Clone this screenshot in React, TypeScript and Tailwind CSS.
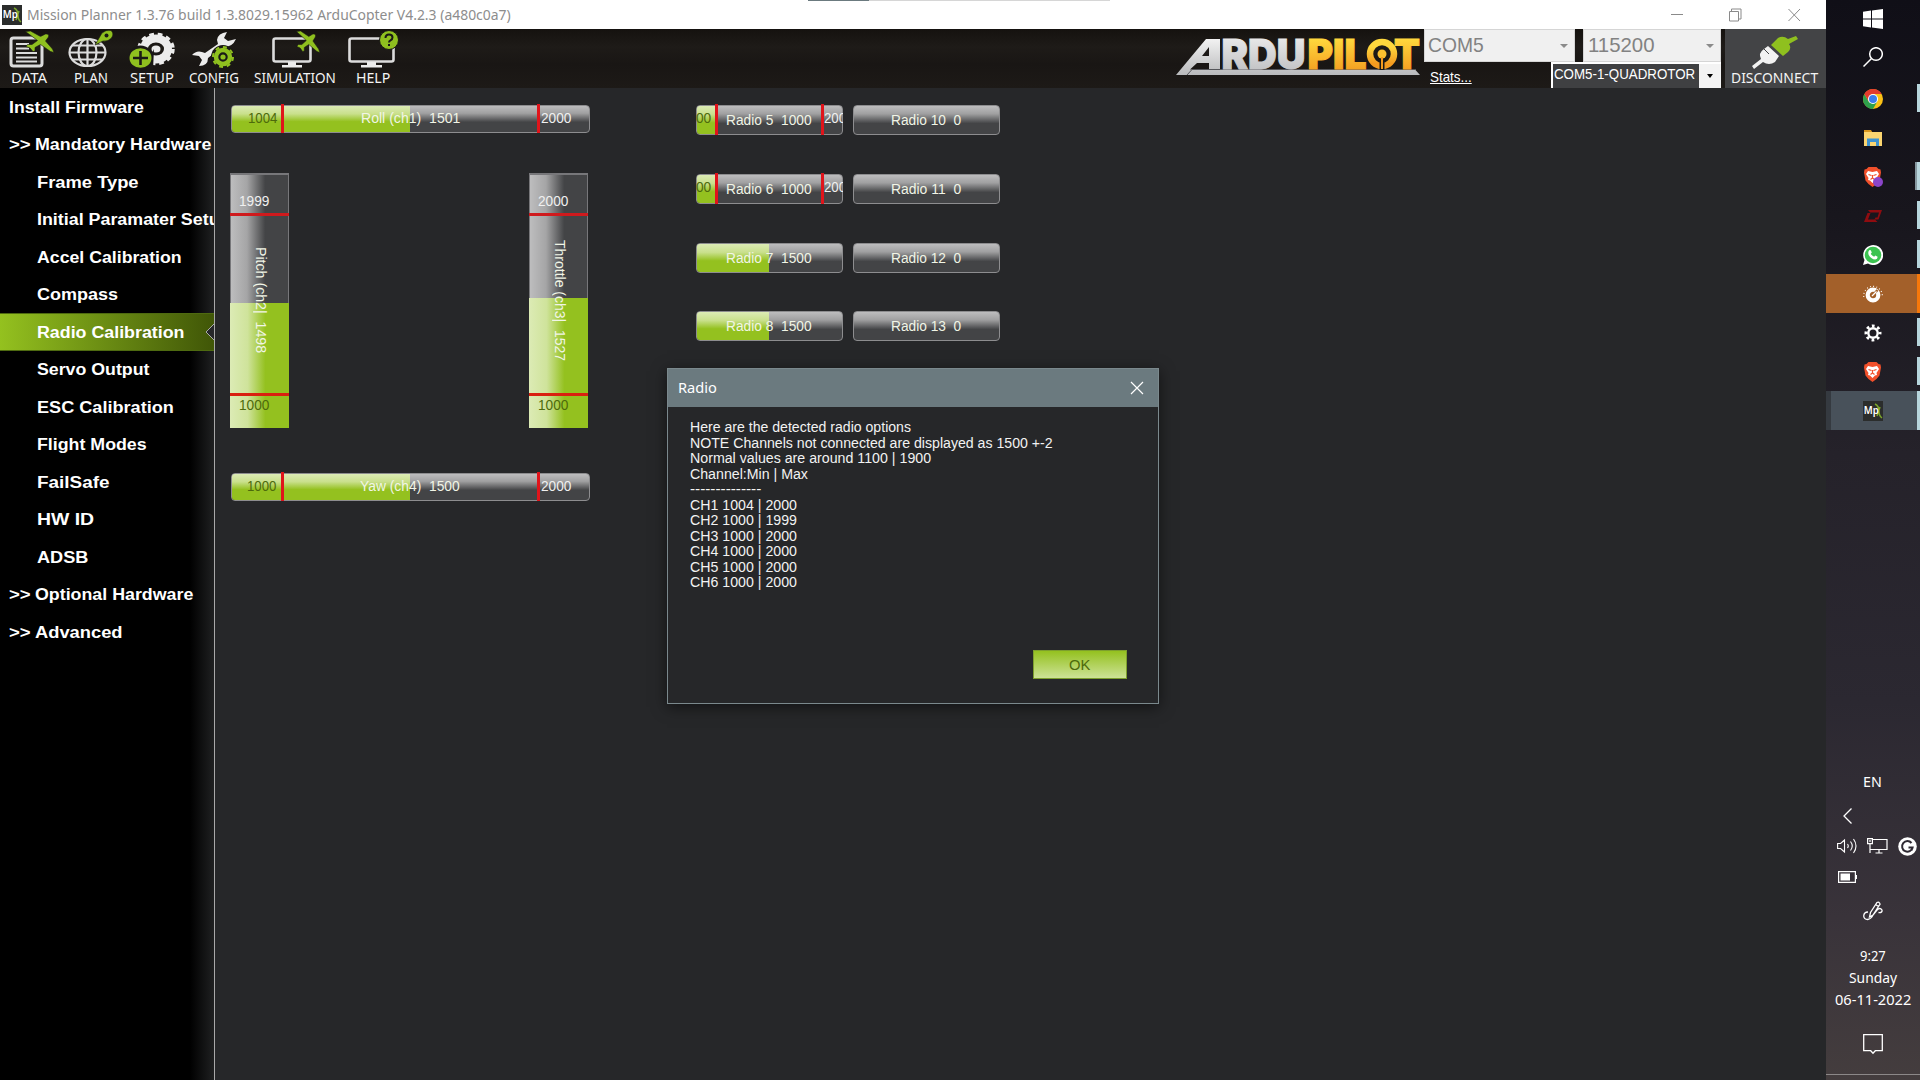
import { useLayoutEffect, useRef, useState } from "react";
import type { ReactNode } from "react";

/** Text squeezed or stretched horizontally to an exact width. */
function Fit({ w, className = "", children }: { w: number; className?: string; children: ReactNode }) {
  const ref = useRef<HTMLSpanElement>(null);
  const [scale, setScale] = useState(1);
  useLayoutEffect(() => {
    if (ref.current) setScale(w / ref.current.offsetWidth);
  }, [w]);
  return (
    <span className={`block whitespace-pre ${className}`} style={{ width: w }}>
      <span ref={ref} className="inline-block origin-left" style={{ transform: `scaleX(${scale})` }}>
        {children}
      </span>
    </span>
  );
}

const PLANE =
  "M0 .5 L5 0 L15 5.500 L20 3 Q24 2.500 23 6 L20 10 L27 18 L28.500 21.500 L25 20.500 L15 13.500 L9.500 16.500 L9.500 20 L7.500 20.500 L4.500 17 L.5 15.500 L2 13.500 L6.500 13.500 L12 9.500 Z";

function DataIcon() {
  return (
    <svg width="48" height="40" viewBox="0 0 48 40" className="-mr-1">
      <rect x="4" y="8" width="31" height="28" rx="2.5" fill="none" stroke="#dcdcdc" strokeWidth="3" />
      <path d="M9 14h13M9 18.500h13M9 23h21M9 27.500h21M9 31.500h21" stroke="#dcdcdc" strokeWidth="2.200" />
      <path d={PLANE} fill="#8fc01f" stroke="#1a1816" strokeWidth=".6" transform="translate(18.500 1)" />
    </svg>
  );
}

function PlanIcon() {
  return (
    <svg width="46" height="40" viewBox="0 0 46 40">
      <g fill="none" stroke="#dcdcdc" strokeWidth="2.200">
        <ellipse cx="19.500" cy="22.500" rx="18" ry="13.500" />
        <ellipse cx="19.500" cy="22.500" rx="9" ry="13.500" />
        <path d="M19.500 9v27M1.500 22.500h36M4.500 15.500h30M4.500 29.500h30" />
      </g>
      <path d="M27 15 L34 3 Q38 -.5 43 .5 Q46.500 3.500 43.500 8 Q40 12 35 11 Z" fill="#8fc01f" stroke="#1a1816" strokeWidth=".6" />
      <circle cx="38.500" cy="5.500" r="2" fill="#1a1816" />
    </svg>
  );
}

function SetupIcon() {
  return (
    <svg width="46" height="40" viewBox="0 0 46 40">
      <ellipse cx="27" cy="19" rx="12" ry="10.500" fill="none" stroke="#ececec" strokeWidth="8" />
      <ellipse cx="27" cy="19" rx="17" ry="14.500" fill="none" stroke="#ececec" strokeWidth="3.500" strokeDasharray="4.600 3.800" />
      <ellipse cx="27" cy="19" rx="4.500" ry="3.500" fill="#ececec" />
      <path d="M25 19 L14 40 H24 Z" fill="#1a1816" />
      <circle cx="11.500" cy="28" r="12.500" fill="#1a1816" />
      <ellipse cx="11.500" cy="28" rx="11" ry="9.800" fill="#8fc01f" />
      <path d="M4 28h15M11.500 21v14" stroke="#1a1816" strokeWidth="2.600" />
    </svg>
  );
}

function ConfigIcon() {
  return (
    <svg width="46" height="40" viewBox="0 0 46 40">
      <path d="M36 2 Q27 3 26 10 L27 14 L14 23 Q6 19 1 25 L8 26 L11 30 L8 36 Q17 36 17 28 L31 17 Q41 18 45 9 L37 11 L33 8 Z" fill="#ececec" />
      <circle cx="32" cy="27" r="12" fill="#1a1816" />
      <circle cx="32" cy="27" r="7" fill="none" stroke="#8fc01f" strokeWidth="4.500" />
      <circle cx="32" cy="27" r="10" fill="none" stroke="#8fc01f" strokeWidth="2" strokeDasharray="3.900 3.900" />
      <circle cx="32" cy="27" r="2.600" fill="#8fc01f" />
    </svg>
  );
}

function MonitorIcon({ help = false }: { help?: boolean }) {
  return (
    <svg width="52" height="40" viewBox="0 0 52 40">
      <rect x={help ? 2.5 : 4.5} y="8.500" width={help ? 44 : 37} height="23" rx="2" fill="none" stroke="#dcdcdc" strokeWidth="2.600" />
      <path d={help ? "M20 32h9v3h6v2.500H14v-2.500h6z" : "M19 32h8v3h6v2.500H13v-2.500h6z"} fill="#ececec" />
      {help ? (
        <>
          <circle cx="42" cy="10" r="9.500" fill="#8fc01f" stroke="#1a1816" strokeWidth="1" />
          <path d="M38.500 8q0-3.500 3.500-3.500t3.500 3q0 1.800-2 2.800-1.500.8-1.500 2.200M42 14v2" stroke="#1a1816" strokeWidth="2" fill="none" />
        </>
      ) : (
        <path d={PLANE} fill="#8fc01f" stroke="#1a1816" strokeWidth=".6" transform="translate(27.500 1) scale(.82 1)" />
      )}
    </svg>
  );
}

function ToolButton({ label, w, className, children }: { label: string; w: number; className: string; children: ReactNode }) {
  return (
    <div className={`flex h-[59px] flex-col items-center ${className}`}>
      <div className="flex h-[41px] items-end">{children}</div>
      <Fit w={w} className="font-['Noto_Sans'] text-[15px] leading-[14px] text-[#f4f4f4]">{label}</Fit>
    </div>
  );
}

function MpIcon({ size }: { size: number }) {
  return (
    <svg width={size} height={size} viewBox="0 0 20 20">
      <rect width="20" height="20" fill="#2b2d2c" />
      <path d="M12 3q4 2 4 7t3 7M17 6l-3 9" stroke="#7ba62b" strokeWidth="1.500" fill="none" />
      <text x=".8" y="13" fontFamily="Noto Sans" fontWeight="600" fontSize="10.500" textLength="15" lengthAdjust="spacingAndGlyphs" fill="#fff">Mp</text>
    </svg>
  );
}

function Logo() {
  return (
    <svg width="246" height="40" viewBox="0 0 246 40" className="overflow-visible">
      <defs>
        <linearGradient id="silver" x1="0" y1="0" x2="0" y2="1">
          <stop offset="0" stopColor="#f2f2f2" />
          <stop offset="1" stopColor="#b9babc" />
        </linearGradient>
        <linearGradient id="gold" x1="0" y1="0" x2="0" y2="1">
          <stop offset=".2" stopColor="#ffd83d" />
          <stop offset=".9" stopColor="#f39a1f" />
        </linearGradient>
      </defs>
      <path d="M0 38 L30 2 H44 V32 H33 V26 H21 L14 32.500 H239 L244 38 Z M33 10 L26 19 H33 Z" fill="url(#silver)" fillRule="evenodd" />
      <path d="M11 38 L16 32.500 H240" stroke="#55565a" strokeWidth="1" fill="none" />
      <g fontFamily="Inter" fontWeight="900" fontSize="41.500">
        <text x="45.500" y="32" textLength="84" lengthAdjust="spacingAndGlyphs" fill="url(#silver)" stroke="url(#silver)" strokeWidth="1">RDU</text>
        <text x="131.500" y="32" textLength="59" lengthAdjust="spacingAndGlyphs" fill="url(#gold)" stroke="url(#gold)" strokeWidth="1">PIL</text>
        <text x="218" y="32" textLength="26" lengthAdjust="spacingAndGlyphs" fill="url(#gold)" stroke="url(#gold)" strokeWidth="1">T</text>
      </g>
      <ellipse cx="206" cy="17" rx="12" ry="12" fill="none" stroke="url(#gold)" strokeWidth="6.500" />
      <path d="M206 17v16" stroke="#1a1816" strokeWidth="5" />
      <circle cx="206" cy="17" r="4.500" fill="#fbc02f" />
      <path d="M206 20v12" stroke="#f39a1f" strokeWidth="2" />
    </svg>
  );
}

function Toolbar() {
  return (
    <div className="flex h-[59px] bg-[linear-gradient(180deg,#15120f,#1e1b18_30%,#191614_60%,#1d1a17)]">
      <ToolButton label="DATA" w={36} className="ml-[7px] w-11"><DataIcon /></ToolButton>
      <ToolButton label="PLAN" w={34} className="ml-[17px] w-[46px]"><PlanIcon /></ToolButton>
      <ToolButton label="SETUP" w={44} className="ml-[15px] w-[46px]"><SetupIcon /></ToolButton>
      <ToolButton label="CONFIG" w={50} className="ml-[14px] w-[50px]"><ConfigIcon /></ToolButton>
      <ToolButton label="SIMULATION" w={82} className="ml-[15px] w-[82px]"><MonitorIcon /></ToolButton>
      <ToolButton label="HELP" w={34} className="ml-[11px] w-[52px]"><MonitorIcon help /></ToolButton>
      <div className="ml-auto mr-[2px] pt-2"><Logo /></div>
      <div className="w-[297px]">
        <div className="flex gap-2">
          <div className="flex h-[33px] w-[151px] items-center justify-between border border-[#d5d5d5] bg-[#f0f0f0] pl-[3px] pr-[6px]">
            <Fit w={56} className="pb-[2px] font-['Liberation_Sans'] text-[21px] leading-[26px] text-[#828282]">COM5</Fit>
            <span className="border-x-[4px] border-t-[4px] border-x-transparent border-t-[#8a8a8a]" />
          </div>
          <div className="flex h-[33px] w-[138px] items-center justify-between border border-[#d5d5d5] bg-[#f0f0f0] pl-[4px] pr-[6px]">
            <Fit w={67} className="pb-[2px] font-['Liberation_Sans'] text-[21px] leading-[26px] text-[#828282]">115200</Fit>
            <span className="border-x-[4px] border-t-[4px] border-x-transparent border-t-[#8a8a8a]" />
          </div>
        </div>
        <div className="flex justify-between">
          <Fit w={42} className="ml-[6px] pt-[6px] font-['Liberation_Sans'] text-[15px] leading-[17px] text-white">
            <span className="underline">Stats...</span>
          </Fit>
          <div className="flex h-[26px] w-[170px] border-l-2 border-t-2 border-white bg-[#3f4042]">
            <Fit w={141} className="pl-[1px] font-['Liberation_Sans'] text-[15.500px] leading-[20px] text-white">COM5-1-QUADROTOR</Fit>
            <div className="ml-auto flex w-[22px] items-center justify-center bg-[#f3f3f3]">
              <span className="border-x-[3.500px] border-t-[4px] border-x-transparent border-t-black" />
            </div>
          </div>
        </div>
      </div>
      <div className="ml-[4px] flex w-[101px] flex-col items-center bg-[#434446] pr-[2px]">
        <svg width="50" height="41" viewBox="0 0 50 41" className="shrink-0">
          <path d="M2 37 L11 30 Q8 24 14 20 L18 17 L29 27 L25 33 Q19 37 13 33 L4 40 Z" fill="#f2f2f2" />
          <path d="M21 16 L33 27 L38 23 Q42 19 39 15 L49 13 L47 10 L40 10 Q34 6 28 9 Z" fill="none" />
          <path d="M21 16 L33 27 L38 23 Q42 19 40 16 L49 14 L40 12 Z" fill="none" />
          <path d="M21 16 L33 27 L38 23 Q42 19 39 15 L48 10 L46 7 L38 10 Q33 6 28 9 Z" fill="#8fc01f" />
          <path d="M14 20l5 5M20 17l9 9" stroke="#434446" strokeWidth="1" />
        </svg>
        <Fit w={87} className="font-['Noto_Sans'] text-[15px] leading-[14px] text-[#f4f4f4]">DISCONNECT</Fit>
      </div>
    </div>
  );
}

type NavItem = { label: string; w: number; level: 0 | 1; group?: boolean; active?: boolean };
const NAV: NavItem[] = [
  { label: "Install Firmware", w: 135, level: 0 },
  { label: "Mandatory Hardware", w: 176, level: 0, group: true },
  { label: "Frame Type", w: 102, level: 1 },
  { label: "Initial Paramater Setup", w: 193, level: 1 },
  { label: "Accel Calibration", w: 145, level: 1 },
  { label: "Compass", w: 81, level: 1 },
  { label: "Radio Calibration", w: 147, level: 1, active: true },
  { label: "Servo Output", w: 112, level: 1 },
  { label: "ESC Calibration", w: 137, level: 1 },
  { label: "Flight Modes", w: 110, level: 1 },
  { label: "FailSafe", w: 72, level: 1 },
  { label: "HW ID", w: 57, level: 1 },
  { label: "ADSB", w: 51, level: 1 },
  { label: "Optional Hardware", w: 158, level: 0, group: true },
  { label: "Advanced", w: 87, level: 0, group: true },
];

function Sidebar() {
  return (
    <nav className="flex w-[215px] shrink-0 flex-col overflow-hidden border-r border-[#a9a9a9] bg-[linear-gradient(90deg,#000_190px,#1e1f20_213px)] font-['Liberation_Sans'] text-[16px] font-bold leading-[18px] text-white">
      {NAV.map((n) => (
        <div
          key={n.label}
          className={`relative flex h-[37.5px] shrink-0 items-center pt-[2px] ${n.level ? "pl-[37px]" : "pl-[9px]"} ${
            n.active ? "border-y border-[#4e6a10] bg-[linear-gradient(90deg,#94c11f,#405607)]" : ""
          }`}
        >
          {n.group && <Fit w={22} className="mr-[4px]">&gt;&gt;</Fit>}
          <Fit w={n.w}>{n.label}</Fit>
          {n.active && (
            <svg className="absolute -right-px top-[9px]" width="10" height="18" viewBox="0 0 10 18">
              <path d="M10 0 L1 9 L10 18 Z" fill="#262729" />
              <path d="M10 0 L1 9 L10 18" fill="none" stroke="#a9a9a9" />
            </svg>
          )}
        </div>
      ))}
    </nav>
  );
}

const TXT = "font-['Liberation_Sans'] text-[15.500px] leading-[18px]";

type HBarProps = {
  label: string; labelW: number; labelX: number; fill: number; className: string; textTop: string;
  min?: { text: string; x: number; w: number; line: number };
  max?: { text: string; x: number; w: number; line: number };
};

function HBar({ label, labelW, labelX, fill, className, textTop, min, max }: HBarProps) {
  return (
    <div className={`relative ${className}`}>
      <div className="absolute inset-0 overflow-hidden rounded-[4px] border-[1.5px] border-[#8d8d8f] bg-[linear-gradient(180deg,#bdbdbe_0%,#a0a0a1_28%,#434446_62%,#434446_100%)]">
        <div className="h-full bg-[linear-gradient(180deg,#dcebb5_0%,#c9e08c_30%,#94c11f_60%,#94c11f_100%)]" style={{ width: fill }} />
      </div>
      <div className={`absolute inset-0 overflow-hidden ${TXT}`}>
        <div className={`absolute ${textTop}`} style={{ left: labelX }}>
          <Fit w={labelW} className="text-[#f1f5e6]">{label}</Fit>
        </div>
        {min && <div className="absolute top-[4px]" style={{ left: min.x }}><Fit w={min.w} className="text-[#4d6a0c]">{min.text}</Fit></div>}
        {max && <div className="absolute top-[4px]" style={{ left: max.x }}><Fit w={max.w} className="text-[#f0f0f0]">{max.text}</Fit></div>}
      </div>
      {min && <div className="absolute -top-px bottom-0 w-[3px] bg-[#e0141b]" style={{ left: min.line }} />}
      {max && <div className="absolute -top-px bottom-0 w-[3px] bg-[#e0141b]" style={{ left: max.line }} />}
    </div>
  );
}

function VBar({ label, labelLen, top, fill, max }: { label: string; labelLen: number; top: number; fill: number; max: string }) {
  return (
    <div className="relative h-[255px] w-[59px] overflow-hidden">
      <div className="absolute inset-0 flex flex-col justify-end border border-t-2 border-[#77777a] bg-[linear-gradient(90deg,#bdbdbe_0%,#a5a5a6_28%,#434446_60%,#434446_100%)]">
        <div className="-mx-px -mb-px bg-[linear-gradient(90deg,#dcebb5_0%,#cfe39b_30%,#94c11f_60%,#94c11f_100%)]" style={{ height: fill }} />
      </div>
      <div className="absolute inset-x-0 top-[40px] h-[3px] bg-[#cf1a1d]" />
      <div className="absolute inset-x-0 top-[220px] h-[3px] bg-[#d9200f]" />
      <div className={`absolute left-[9px] top-[19px] text-[#f0f0f0] ${TXT}`}><Fit w={30}>{max}</Fit></div>
      <div className={`absolute left-[9px] top-[223px] text-[#4d6a0c] ${TXT}`}><Fit w={30}>1000</Fit></div>
      <div className={`absolute left-[40px] origin-top-left rotate-90 text-[#f1f5e6] ${TXT}`} style={{ top }}>
        <Fit w={labelLen}>{label}</Fit>
      </div>
    </div>
  );
}

const RADIOS = [
  { left: 5, v: 1000, right: 10 },
  { left: 6, v: 1000, right: 11 },
  { left: 7, v: 1500, right: 12 },
  { left: 8, v: 1500, right: 13 },
];

function Calibration() {
  return (
    <main className="flex flex-1 bg-[#262729] pl-[15px] pt-[17px]">
      <div className="w-[361px]">
        <HBar
          className="ml-px h-[28px] w-[359px]" textTop="top-[4px]" label="Roll (ch1)  1501" labelW={99} labelX={130} fill={178}
          min={{ text: "1004", x: 17, w: 29, line: 50 }} max={{ text: "2000", x: 310, w: 30, line: 306 }}
        />
        <div className="mt-[39.500px] flex justify-between pr-[3px]">
          <VBar label="Pitch (ch2|  1498" labelLen={106} top={74} fill={125} max="1999" />
          <VBar label="Throttle (ch3|  1527" labelLen={121} top={67} fill={130} max="2000" />
        </div>
        <HBar
          className="ml-px mt-[45px] h-[28px] w-[359px]" textTop="top-[4px]" label="Yaw (ch4)  1500" labelW={100} labelX={129} fill={178}
          min={{ text: "1000", x: 16, w: 29, line: 50 }} max={{ text: "2000", x: 310, w: 30, line: 306 }}
        />
      </div>
      <div className="ml-[105px] flex flex-col gap-[38.800px]">
        {RADIOS.map((r) => (
          <div key={r.left} className="flex gap-[10px]">
            <HBar
              className="h-[30px] w-[147px]" textTop="top-[6px]" label={`Radio ${r.left}  ${r.v}`} labelW={86} labelX={30} fill={r.v === 1000 ? 18 : 72}
              min={r.v === 1000 ? { text: "00", x: 0, w: 15, line: 19 } : undefined}
              max={r.v === 1000 ? { text: "2000", x: 128, w: 29, line: 125 } : undefined}
            />
            <HBar className="h-[30px] w-[147px]" textTop="top-[6px]" label={`Radio ${r.right}  0`} labelW={70} labelX={38} fill={0} />
          </div>
        ))}
      </div>
    </main>
  );
}

const MESSAGE: [string, number][] = [
  ["Here are the detected radio options", 221],
  ["NOTE Channels not connected are displayed as 1500 +-2", 363],
  ["Normal values are around 1100 | 1900", 241],
  ["Channel:Min | Max", 118],
  ["--------------", 71],
  ["CH1 1004 | 2000", 107],
  ["CH2 1000 | 1999", 107],
  ["CH3 1000 | 2000", 107],
  ["CH4 1000 | 2000", 107],
  ["CH5 1000 | 2000", 107],
  ["CH6 1000 | 2000", 107],
];

function Dialog() {
  return (
    <div className="absolute left-[667px] top-[368px] flex h-[336px] w-[492px] flex-col border border-[#7b898d] bg-[#262729] shadow-[0_3px_14px_rgba(0,0,0,.55)]">
      <div className="flex h-[38px] items-center justify-between bg-[#6b7a7f] pl-[10px] pr-[14px]">
        <Fit w={39} className="pb-[2px] font-['Noto_Sans'] text-[15px] leading-[18px] text-white">Radio</Fit>
        <svg width="14" height="14" viewBox="0 0 14 14"><path d="M1 1l12 12M13 1L1 13" stroke="#fff" strokeWidth="1.200" /></svg>
      </div>
      <div className={`flex flex-1 flex-col pl-[22px] pt-[11px] text-[#f2f2f2] ${TXT}`}>
        {MESSAGE.map(([line, w]) => (
          <Fit key={line} w={w} className="h-[15.550px]">{line}</Fit>
        ))}
        <div className="mb-[24px] mr-[31px] mt-auto flex h-[29px] w-[94px] items-center justify-center self-end border border-[#7d9f2d] bg-[linear-gradient(180deg,#94c11f,#cde296)]">
          <Fit w={21} className="mr-px text-[#4d6a0c]">OK</Fit>
        </div>
      </div>
    </div>
  );
}

function BraveIcon({ badge = false }: { badge?: boolean }) {
  return (
    <svg width="20" height="20" viewBox="0 0 20 20">
      <path d="M5.500 0h8l2 2 2 .5.500 3-1.500 8-3 3.500-4 3-4-3-3-3.500L1 5.500l.5-3 2-.5z" fill="#f1502b" />
      <path d="M5 4l4.500 1L14 4l2 3-2.500 4 .5 2-2 .5-2.500 2.500L7 13.500 5 13l.5-2L3 7z" fill="#fff" />
      <path d="M5.500 7.500l3 1M13.500 7.500l-3 1M9.500 8v3l-2 1.500M9.500 11l2 1.500" stroke="#f1502b" strokeWidth="1.200" fill="none" />
      {badge && <circle cx="15" cy="15" r="5" fill="#8b45c9" />}
    </svg>
  );
}

function Slot({ children, mark, bg = "" }: { children: ReactNode; mark?: "thin" | "wide" | "full" | "hot"; bg?: string }) {
  return (
    <div className={`relative flex h-[39px] w-[94px] shrink-0 items-center justify-center ${bg}`}>
      {children}
      {mark === "thin" && <span className="absolute right-0 top-[5px] h-[28px] w-[3px] bg-[#b7d6dd]" />}
      {mark === "wide" && <span className="absolute right-0 top-[5px] h-[28px] w-[5px] border-r-[3px] border-[#b7d6dd] bg-[#8698a0]" />}
      {mark === "full" && <span className="absolute bottom-0 right-0 top-0 w-[3px] bg-[#b7d6dd]" />}
      {mark === "hot" && <span className="absolute bottom-0 right-0 top-0 w-[3px] bg-[#f7780a]" />}
    </div>
  );
}

function Taskbar() {
  return (
    <aside className="flex h-[1080px] w-[94px] flex-col overflow-hidden bg-[linear-gradient(180deg,#100f17_0%,#18161d_20%,#25222a_42%,#2b2831_65%,#39333a_85%,#443d3e_100%)]">
      <div className="-mt-px">
        <Slot>
          <svg width="20" height="20" viewBox="0 0 20 20"><path d="M0 2.800L8 1.600V9.500H0zM9 1.400L20 0V9.500H9zM0 10.500H8V18.400L0 17.200zM9 10.500H20V20L9 18.600z" fill="#fff" /></svg>
        </Slot>
      </div>
      <div className="-mt-[1px] mb-[3px]">
        <Slot>
          <svg width="20" height="20" viewBox="0 0 20 20" fill="none" stroke="#fff" strokeWidth="1.500"><circle cx="13" cy="7" r="6.300" /><path d="M8.500 11.500L.5 19.500" /></svg>
        </Slot>
      </div>
      <Slot mark="thin">
        <svg width="20" height="20" viewBox="0 0 20 20">
          <circle cx="10" cy="10" r="10" fill="#fbc116" />
          <path d="M10 10L1.340 5A10 10 0 0 1 18.660 5H10z" fill="#e33b2e" />
          <path d="M1.340 5A10 10 0 0 0 10 20L14.300 12.500 10 10 5.700 12.500z" fill="#2da14c" />
          <path d="M1.340 5L5.700 12.500 10 5z" fill="#e33b2e" />
          <circle cx="10" cy="10" r="5" fill="#fff" /><circle cx="10" cy="10" r="4" fill="#3b7ded" />
        </svg>
      </Slot>
      <Slot>
        <svg width="20" height="18" viewBox="0 0 20 18">
          <path d="M1 1h7l1.500 2.500H1z" fill="#d9971d" /><path d="M1 3h18v14H1z" fill="#fbd570" />
          <path d="M4 17V9.500h12V17h-3v-4H7v4z" fill="#3f93cf" />
        </svg>
      </Slot>
      <Slot mark="wide"><BraveIcon badge /></Slot>
      <Slot mark="thin">
        <svg width="20" height="14" viewBox="0 0 20 14" fill="#8f0c10"><path d="M5 1h14l-3.500 9.500h-4l1-2h2L16 3.500H7zM14.500 13H1l3.500-9h3L5 10.500h7z" /></svg>
      </Slot>
      <Slot mark="thin">
        <svg width="20" height="20" viewBox="0 0 20 20">
          <path d="M0 20l1.500-5A10 10 0 1 1 5 18.600z" fill="#fff" /><circle cx="10" cy="10" r="8.300" fill="#3cc351" />
          <path d="M6.500 5l1.300.2 1 2.300-1 1.200q1 2 3.300 3l1.200-1.200 2.300 1.200q.2 2.500-2.300 2.800-4-.2-6.600-4.500Q4.500 6.500 6.500 5z" fill="#fff" />
        </svg>
      </Slot>
      <Slot mark="hot" bg="bg-[#a3602a]">
        <svg width="20" height="20" viewBox="0 0 20 20">
          <circle cx="10" cy="11" r="5.300" fill="none" stroke="#fff" strokeWidth="4.200" /><path d="M10 11l4.500-5" stroke="#a3602a" strokeWidth="2.500" /><circle cx="10" cy="11" r="2" fill="#a3602a" /><path d="M9 12l4.500-4.500" stroke="#fff" strokeWidth="1.300" />
          <path d="M.8 13a9.300 9.300 0 1 1 18.400 0" fill="none" stroke="#fff" strokeWidth="1.100" strokeDasharray="1 2.200" />
        </svg>
      </Slot>
      <Slot mark="thin">
        <svg width="18" height="18" viewBox="0 0 18 18" fill="none" stroke="#fff">
          <circle cx="9" cy="9" r="4.700" strokeWidth="2.400" /><circle cx="9" cy="9" r="7" strokeWidth="3" strokeDasharray="2.700 2.798" strokeDashoffset="1.350" />
        </svg>
      </Slot>
      <Slot mark="thin"><BraveIcon /></Slot>
      <Slot mark="full" bg="border-l-[5px] border-[#353a40] bg-[#48515a] pr-[5px]"><MpIcon size={20} /></Slot>

      <div className="mt-auto flex flex-col items-center pb-[19px] font-['Noto_Sans'] text-[15px] leading-[22px] text-white">
        <Fit w={19} className="mr-[2px]">EN</Fit>
        <svg className="ml-[17px] mt-[16px] self-start" width="9" height="16" viewBox="0 0 9 16"><path d="M8.500.5L1 8l7.500 7.500" stroke="#fff" strokeWidth="1.300" fill="none" /></svg>
        <div className="mt-[12px] flex h-[20px] items-center gap-[10px] self-start pl-[11px]">
          <svg width="20" height="18" viewBox="0 0 20 18" fill="none" stroke="#fff" strokeWidth="1.100"><path d="M.6 6.500h3L7.500 3v12L3.600 11.500h-3zM10.500 7q1.500 2 0 4M13.500 4.500q3.500 4.500 0 9M16.500 2q5 7 0 14" /></svg>
          <svg width="21" height="18" viewBox="0 0 21 18" fill="none" stroke="#fff" strokeWidth="1.200"><path d="M6 2.500h14v10H3.500M12 12.500v3.500M8.500 16h7M3 7v9M.6 1.600h4.800v5H.6zM3 3v2" /></svg>
          <svg width="19" height="19" viewBox="0 0 19 19"><circle cx="9.500" cy="9.500" r="9.300" fill="#fff" /><path d="M13.500 6A5.300 5.300 0 1 0 14.600 10.500H10.500M14.600 10.500l-1.300 3" stroke="#2f2a33" strokeWidth="2" fill="none" /></svg>
        </div>
        <svg className="ml-[12px] mt-[15px] self-start" width="19" height="12" viewBox="0 0 19 12"><path d="M.6.600h16.800v10.800H.6z" stroke="#fff" strokeWidth="1.200" fill="none" /><path d="M2.500 2.500h9.500v7H2.500zM17.500 4H19v4h-1.500z" fill="#fff" /></svg>
        <svg className="mt-[18px]" width="20" height="20" viewBox="0 0 20 20" fill="none" stroke="#fff" strokeWidth="1.300"><path d="M6.500 16L7.500 11.500 14 1.500q1.500-1 2.500.5t0 2L10 14zM12.500 3.500l3 2M5 11q-4 0-4.300 4 .3 3.500 4 3.500Q8 18 10 14l4-5q3-3 5 0 .5 3-3.500 2.500" /></svg>
        <div className="mt-[23px] flex flex-col items-center">
          <Fit w={26}>9:27</Fit>
          <Fit w={48}>Sunday</Fit>
          <Fit w={76}>06-11-2022</Fit>
        </div>
        <svg className="mt-[24px]" width="20" height="21" viewBox="0 0 20 21"><path d="M.7.700h18.600v16h-7L10 19.300 7.700 16.700h-7z" stroke="#fff" strokeWidth="1.300" fill="none" /></svg>
      </div>
      <div className="mb-[5px] h-px shrink-0 bg-[#8c8888]" />
    </aside>
  );
}

export default function App() {
  return (
    <div className="relative flex h-[1080px] w-[1920px] overflow-hidden bg-[#262729]">
      <div className="flex w-[1826px] flex-col">
        <header className="relative flex h-[29px] items-center bg-white pl-[2px]">
          <MpIcon size={20} />
          <Fit w={484} className="ml-[5px] pb-[2px] font-['Noto_Sans'] text-[15px] leading-[20px] text-[#8d8d8d]">
            Mission Planner 1.3.76 build 1.3.8029.15962 ArduCopter V4.2.3 (a480c0a7)
          </Fit>
          <div className="absolute left-[808px] top-0 flex h-px w-[302px] bg-[#d6d6d6]">
            <div className="w-[61px] bg-[#6b7a7f]" />
          </div>
          <svg className="ml-auto mr-[25px]" width="131" height="14" viewBox="0 0 131 14" fill="none" stroke="#8a8a8a" strokeWidth="1">
            <path d="M1 6.500h12M59.500 3.500h9v9.500h-9zM61.500 3.500v-2.500h9.500v10h-2.500M118.500 1l11.500 12M130 1l-11.500 12" />
          </svg>
        </header>
        <Toolbar />
        <div className="flex min-h-0 flex-1">
          <Sidebar />
          <Calibration />
        </div>
      </div>
      <Taskbar />
      <Dialog />
    </div>
  );
}
